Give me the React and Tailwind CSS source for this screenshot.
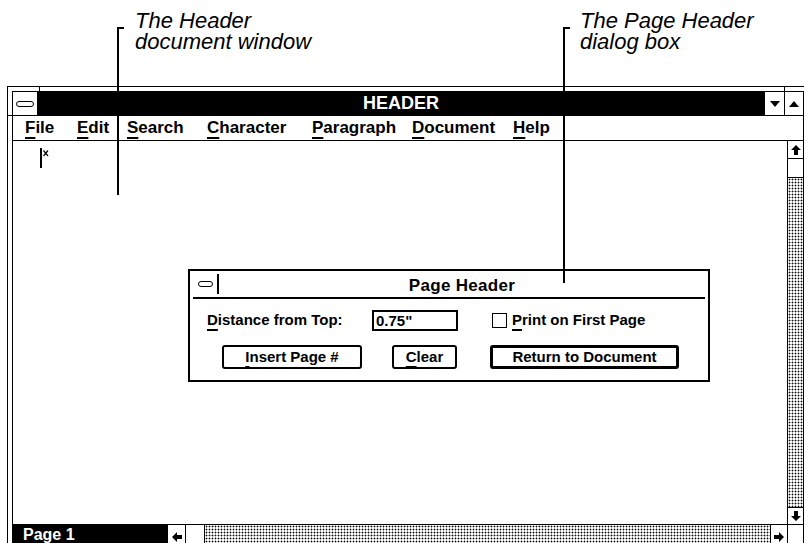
import React from 'react';

// dithered scrollbar track
const dots = "bg-[radial-gradient(circle,#000_0.8px,transparent_1.1px)] bg-[length:3px_3px]";

function Dash({ w = 18 }) {
  return <div className="h-[6px] rounded-full border-[1.5px] border-black bg-white" style={{ width: w }} />;
}

function BlockArrow({ dir }) {
  const rot = { up: 0, down: 180, left: 270, right: 90 }[dir];
  return (
    <svg width="10" height="10" viewBox="0 0 10 10" style={{ transform: `rotate(${rot}deg)` }}>
      <polygon points="5,0 10,5 7,5 7,10 3,10 3,5 0,5" fill="#000" />
    </svg>
  );
}

function Tri({ up }) {
  return (
    <svg width="10" height="6" viewBox="0 0 10 6">
      <polygon points={up ? "0,6 10,6 5,0" : "0,0 10,0 5,6"} fill="#000" />
    </svg>
  );
}

const menu = [
  ['F', 'ile', 'w-[52px]'],
  ['E', 'dit', 'w-[50px]'],
  ['S', 'earch', 'w-[80px]'],
  ['C', 'haracter', 'w-[105px]'],
  ['P', 'aragraph', 'w-[100px]'],
  ['D', 'ocument', 'w-[101px]'],
  ['H', 'elp', 'w-[50px]'],
];

function Mn({ k, rest }) {
  return (
    <span>
      <span className="underline decoration-[1.5px] underline-offset-[4px]">{k}</span>{rest}
    </span>
  );
}

export default function App() {
  return (
    <div className="relative w-[804px] h-[543px] overflow-hidden bg-white text-black font-['Liberation_Sans',Arial,sans-serif]">
      {/* callouts */}
      <div className="absolute left-[135px] top-[10px] italic text-[22px] leading-[21px]">
        <div>The Header</div>
        <div>document window</div>
      </div>
      <div className="absolute left-[580px] top-[10px] italic text-[22px] leading-[21px]">
        <div>The Page Header</div>
        <div>dialog box</div>
      </div>
      <div className="absolute left-[117px] top-[27px] w-[7px] h-[2px] bg-black z-10" />
      <div className="absolute left-[117px] top-[27px] w-[2px] h-[168px] bg-black z-10" />
      <div className="absolute left-[563px] top-[27px] w-[7px] h-[2px] bg-black z-10" />
      <div className="absolute left-[563px] top-[27px] w-[2px] h-[256px] bg-black z-10" />

      {/* window */}
      <div className="relative ml-[7px] mt-[86px] w-[802px] border-t border-l border-r border-black pl-[4px] pt-[4px] pr-[4px]">
        <div className="absolute left-[31px] top-0 w-px h-[4px] bg-black" />
        <div className="absolute left-[776px] top-0 w-px h-[4px] bg-black" />
        <div className="absolute left-0 top-[28px] w-[4px] h-px bg-black" />
        <div className="border-t border-l border-r border-black">
          {/* title bar */}
          <div className="flex h-[23px]">
            <div className="w-[25px] border-r border-black flex items-center justify-center">
              <Dash w={18} />
            </div>
            <div className="flex-1 bg-black text-white font-bold text-[18px] flex items-center justify-center">
              HEADER
            </div>
            <div className="w-[20px] border-l border-black flex items-center justify-center">
              <Tri />
            </div>
            <div className="w-[19px] border-l border-black flex items-center justify-center">
              <Tri up />
            </div>
          </div>
          {/* menu bar */}
          <div className="flex h-[26px] border-t border-b border-black pl-[12px] font-bold text-[17px] leading-[24px]">
            {menu.map(([k, rest, w]) => (
              <div key={k} className={w}>
                <Mn k={k} rest={rest} />
              </div>
            ))}
          </div>
          {/* client */}
          <div className="flex h-[383px]">
            <div className="relative flex-1 pl-[27px] pt-[7px]">
              <div className="flex items-start">
                <div className="w-[2px] h-[20px] bg-black" />
                <svg width="6" height="7" viewBox="0 0 6 7" className="mt-[2px] ml-[1px]">
                  <path d="M0.5 0.5 L5 6 M5 0.5 L0.5 6" stroke="#000" strokeWidth="1.2" />
                </svg>
              </div>

              {/* Page Header dialog */}
              <div className="absolute left-[175px] top-[128px] w-[522px] h-[113px] border-2 border-black bg-white p-[3px]">
                <div className="flex h-[25px] border-b-2 border-black">
                  <div className="w-[26px] h-[20px] border-r-2 border-black flex items-center justify-center">
                    <Dash w={15} />
                  </div>
                  <div className="flex-1 flex items-center justify-center font-bold text-[17px] tracking-[0.3px]">
                    Page Header
                  </div>
                </div>
                <div className="flex items-center h-[24px] mt-[9px] pl-[14px] font-bold text-[15px]">
                  <div className="w-[165px]">
                    <Mn k="D" rest="istance from Top:" />
                  </div>
                  <div className="w-[86px] h-[21px] border-2 border-black pl-[2px] leading-[17px]">0.75"</div>
                  <div className="ml-[34px] w-[15px] h-[15px] border-[1.5px] border-black" />
                  <div className="ml-[5px]">
                    <Mn k="P" rest="rint on First Page" />
                  </div>
                </div>
                <div className="flex h-[24px] mt-[13px] font-bold text-[15px]">
                  <div className="ml-[29px] w-[140px] border-2 border-black rounded-[3px] flex items-center justify-center">
                    <Mn k="I" rest="nsert Page #" />
                  </div>
                  <div className="ml-[30px] w-[65px] border-2 border-black rounded-[3px] flex items-center justify-center">
                    <Mn k="C" rest="lear" />
                  </div>
                  <div className="ml-[33px] w-[189px] border-[3px] border-black rounded-[3px] flex items-center justify-center">
                    <Mn k="R" rest="eturn to Document" />
                  </div>
                </div>
              </div>
            </div>
            {/* vertical scroll bar */}
            <div className="w-[16px] border-l border-black flex flex-col">
              <div className="h-[18px] border-b border-black flex items-center justify-center">
                <BlockArrow dir="up" />
              </div>
              <div className="h-[19px] border-b border-black" />
              <div className={`flex-1 ${dots}`} />
              <div className="h-[17px] border-t border-black flex items-center justify-center">
                <BlockArrow dir="down" />
              </div>
            </div>
          </div>
          {/* status + horizontal scroll */}
          <div className="flex h-[24px] border-t border-black">
            <div className="w-[155px] bg-black text-white font-bold text-[16px] leading-[20px] pl-[10px]">Page 1</div>
            <div className="w-[18px] border-r border-black flex items-center justify-center">
              <BlockArrow dir="left" />
            </div>
            <div className="w-[19px] border-r border-black" />
            <div className={`flex-1 ${dots}`} />
            <div className="w-[17px] border-l border-black flex items-center justify-center">
              <BlockArrow dir="right" />
            </div>
            <div className="w-[16px] border-l border-black" />
          </div>
        </div>
      </div>
    </div>
  );
}
